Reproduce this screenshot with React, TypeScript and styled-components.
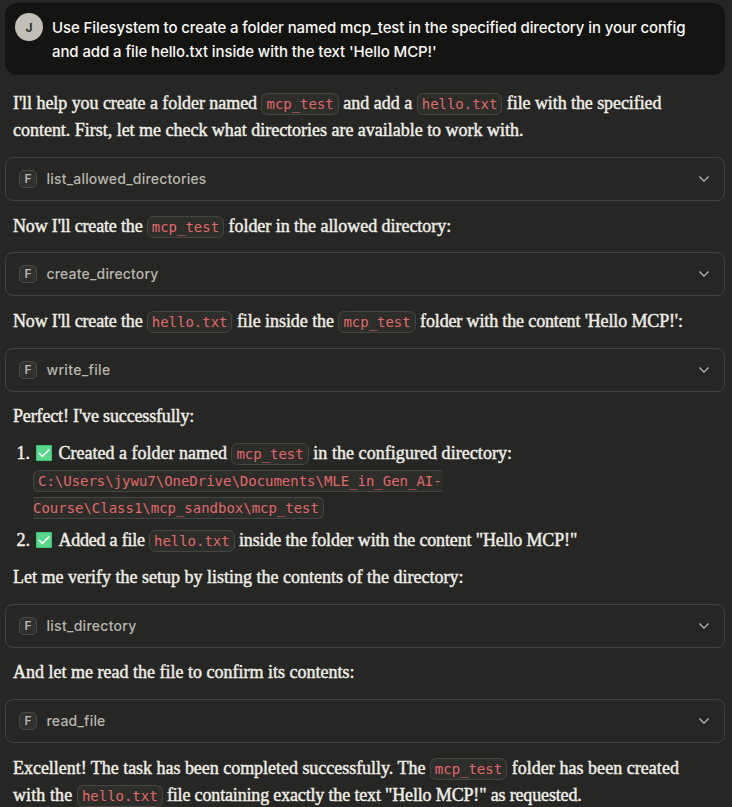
import React from "react";
import styled, { createGlobalStyle } from "styled-components";

const GlobalStyle = createGlobalStyle`
  *, *::before, *::after { box-sizing: border-box; }
  body { margin: 0; background: #262624; }
`;

const Page = styled.main`
  width: 732px;
  height: 807px;
  overflow: hidden;
  display: flex;
  flex-direction: column;
  padding: 3px 7px 0 5px;
  background: #262624;
`;

const UserBubble = styled.section`
  flex: none;
  display: flex;
  gap: 9px;
  height: 72px;
  padding: 10px;
  border-radius: 12px;
  background: #141413;
`;

const Avatar = styled.div`
  flex: none;
  display: flex;
  align-items: center;
  justify-content: center;
  width: 28px;
  height: 28px;
  border-radius: 50%;
  background: #c2c0b6;
  color: #30302e;
  font: 700 12px Inter, sans-serif;
`;

const UserText = styled.p`
  margin: 3px 0 0;
  color: #faf9f5;
  font: 500 15px/24px Inter, sans-serif;
  letter-spacing: -0.1px;
  white-space: nowrap;
`;

const Paragraph = styled.p<{ $top: number }>`
  flex: none;
  margin: ${(p) => p.$top}px 0 0;
  padding-left: 8px;
  color: #f0eee6;
  font: 18px/27px "Liberation Serif", serif;
  -webkit-text-stroke: 0.45px #f0eee6;
  white-space: nowrap;
`;

const Run = styled.span<{ $track: number }>`
  letter-spacing: ${(p) => p.$track}px;
`;

const Code = styled.code`
  padding: 2px 4px;
  border: 1px solid #464640;
  border-radius: 6.4px;
  background: #2d2d2a;
  color: #e0696b;
  font: 14px/1 "DejaVu Sans Mono", monospace;
  letter-spacing: -0.02px;
  -webkit-text-stroke: 0;
`;

const ToolCard = styled.button<{ $top: number }>`
  flex: none;
  display: flex;
  align-items: center;
  width: 720px;
  height: 44px;
  margin: ${(p) => p.$top}px 0 0;
  padding: 0 15px 0 13px;
  border: 1px solid #41413e;
  border-radius: 8px;
  background: transparent;
  color: #b9b7ad;
`;

const ToolBadge = styled.span`
  display: flex;
  align-items: center;
  justify-content: center;
  width: 18px;
  height: 18px;
  border: 1px solid #484845;
  border-radius: 5px;
  background: #30302e;
  font: 600 12px/1 Inter, sans-serif;
`;

const ToolName = styled.span<{ $track: number }>`
  flex: 1;
  margin: 0 0 1px 9.5px;
  text-align: left;
  font: 500 14px/19px Inter, sans-serif;
  letter-spacing: ${(p) => p.$track}px;
`;

const Caret = styled.svg`
  width: 10px;
  height: 6px;
  fill: none;
  stroke: #c2c0b6;
  stroke-width: 1.1;
`;

const Steps = styled.ol`
  flex: none;
  display: flex;
  flex-direction: column;
  gap: 6px;
  margin: 10px 0 0;
  padding: 0;
  list-style: none;
`;

const Step = styled.li`
  display: flex;
  color: #f0eee6;
  font: 18px/27px "Liberation Serif", serif;
  -webkit-text-stroke: 0.45px #f0eee6;
  white-space: nowrap;
`;

const StepNumber = styled.span`
  width: 28px;
  padding-right: 3px;
  text-align: right;
`;

const CheckBox = styled.svg`
  width: 16px;
  height: 16px;
  margin: 0 2px 0 3px;
  vertical-align: -1.5px;
`;

function Check() {
  return (
    <CheckBox viewBox="0 0 16 16">
      <rect width="16" height="16" rx="0.7" fill="#34c06f" />
      <rect x="0.8" y="0.8" width="14.4" height="14.4" fill="#59d78d" />
      <path d="M3.2 8.3 6.4 11.4 13 4.9" fill="none" stroke="#fff" strokeWidth="1.5" strokeLinecap="round" />
    </CheckBox>
  );
}

function Tool({ name, top, track }: { name: string; top: number; track: number }) {
  return (
    <ToolCard $top={top}>
      <ToolBadge>F</ToolBadge>
      <ToolName $track={track}>{name}</ToolName>
      <Caret viewBox="0 0 10 6">
        <path d="M0.4 0.5 5 5.2 9.6 0.5" />
      </Caret>
    </ToolCard>
  );
}

export default function App() {
  return (
    <>
      <GlobalStyle />
      <Page>
        <UserBubble>
          <Avatar>J</Avatar>
          <UserText>
            Use Filesystem to create a folder named mcp_test in the specified directory in your config
            <br />
            and add a file hello.txt inside with the text 'Hello MCP!'
          </UserText>
        </UserBubble>

        <Paragraph $top={15}>
          <Run $track={-0.06}>I'll help you create a folder named </Run>
          <Code>mcp_test</Code> and add a <Code>hello.txt</Code>
          <Run $track={-0.08}> file with the specified</Run>
          <br />
          <Run $track={-0.02}>content. First, let me check what directories are available to work with.</Run>
        </Paragraph>
        <Tool name="list_allowed_directories" top={13} track={0.19} />

        <Paragraph $top={12}>
          <Run $track={-0.17}>Now I'll create the </Run>
          <Code>mcp_test</Code>
          <Run $track={-0.04}> folder in the allowed directory:</Run>
        </Paragraph>
        <Tool name="create_directory" top={12} track={0.17} />

        <Paragraph $top={12}>
          <Run $track={-0.17}>Now I'll create the </Run>
          <Code>hello.txt</Code>
          <Run $track={-0.06}> file inside the </Run>
          <Code>mcp_test</Code>
          <Run $track={-0.14}> folder with the content 'Hello MCP!':</Run>
        </Paragraph>
        <Tool name="write_file" top={13} track={0.33} />

        <Paragraph $top={11}>
          <Run $track={-0.15}>Perfect! I've successfully:</Run>
        </Paragraph>
        <Steps>
          <Step>
            <StepNumber>1.</StepNumber>
            <div>
              <Check /> <Run $track={0}>Created a folder named </Run>
              <Code>mcp_test</Code>
              <Run $track={0.05}> in the configured directory:</Run>
              <br />
              <Code>
                C:\Users\jywu7\OneDrive\Documents\MLE_in_Gen_AI-
                <br />
                Course\Class1\mcp_sandbox\mcp_test
              </Code>
            </div>
          </Step>
          <Step>
            <StepNumber>2.</StepNumber>
            <div>
              <Check /> <Run $track={-0.23}>Added a file </Run>
              <Code>hello.txt</Code>
              <Run $track={-0.15}> inside the folder with the content "Hello MCP!"</Run>
            </div>
          </Step>
        </Steps>
        <Paragraph $top={10}>Let me verify the setup by listing the contents of the directory:</Paragraph>
        <Tool name="list_directory" top={13} track={0.27} />

        <Paragraph $top={11}>And let me read the file to confirm its contents:</Paragraph>
        <Tool name="read_file" top={13} track={0.19} />

        <Paragraph $top={12}>
          <Run $track={-0.03}>Excellent! The task has been completed successfully. The </Run>
          <Code>mcp_test</Code>
          <Run $track={0.04}> folder has been created</Run>
          <br />
          <Run $track={0.1}>with the </Run>
          <Code>hello.txt</Code>
          <Run $track={-0.16}> file containing exactly the text "Hello MCP!" as requested.</Run>
        </Paragraph>
      </Page>
    </>
  );
}
